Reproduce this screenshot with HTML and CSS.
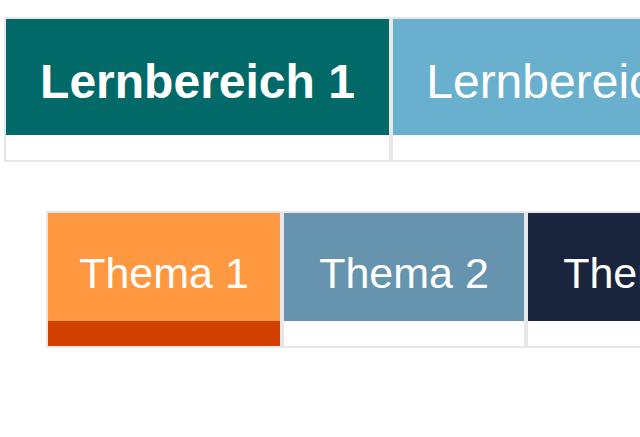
FILE: index.html
```html
<!DOCTYPE html>
<html lang="de">
<head>
<meta charset="utf-8">
<title>Lernbereiche</title>
<link rel="stylesheet" href="styles.css">
</head>
<body>
<div class="page">
  <div class="tabs tabs-main">
    <div class="tab tab-w1 active">
      <div class="tab-label bg-teal">Lernbereich 1</div>
      <div class="tab-strip"></div>
    </div>
    <div class="tab tab-w2">
      <div class="tab-label bg-sky">Lernbereich 2</div>
      <div class="tab-strip"></div>
    </div>
  </div>
  <div class="tabs tabs-sub">
    <div class="tab tab-t1">
      <div class="tab-label bg-orange">Thema 1</div>
      <div class="tab-strip strip-orange"></div>
    </div>
    <div class="tab tab-t2">
      <div class="tab-label bg-steel">Thema 2</div>
      <div class="tab-strip"></div>
    </div>
    <div class="tab tab-t3">
      <div class="tab-label bg-navy">Thema 3</div>
      <div class="tab-strip"></div>
    </div>
  </div>
</div>
</body>
</html>
```

FILE: styles.css
```css
html, body {
  margin: 0;
  padding: 0;
  background: #ffffff;
  overflow: hidden;
}

body {
  font-family: "Liberation Sans", Arial, sans-serif;
  width: 640px;
  height: 437px;
}

.page {
  display: flex;
  flex-direction: column;
  align-items: flex-start;
  padding: 17px 0 0 4px;
  gap: 49px;
}

.tabs {
  display: flex;
  flex-wrap: nowrap;
  gap: 4px;
  border: 2px solid #e7e7e7;
  background: #e7e7e7;
}

.tabs-sub {
  margin-left: 42px;
}

.tab {
  flex: 0 0 auto;
  display: flex;
  flex-direction: column;
  background: #ffffff;
}

.tab-label {
  box-sizing: border-box;
  color: #ffffff;
  text-align: center;
  white-space: nowrap;
}

.tabs-main .tab-label {
  height: 116px;
  padding-top: 9px;
  line-height: 107px;
  font-size: 48px;
}

.tabs-main .active .tab-label {
  font-weight: bold;
}

.tabs-sub .tab-label {
  height: 108px;
  padding-top: 12px;
  line-height: 96px;
  font-size: 43px;
}

.tab-strip {
  height: 25px;
  background: #ffffff;
}

.tab-w1 { width: 383px; }
.tab-w2 { width: 360px; }
.tab-t1 { width: 232px; }
.tab-t2 { width: 240px; }
.tab-t3 { width: 240px; }

.bg-teal { background: #016968; }
.bg-sky { background: #68b0cd; }
.bg-orange { background: #fe9841; }
.bg-steel { background: #6693ae; }
.bg-navy { background: #19253c; }
.strip-orange { background: #d24000; }
```
